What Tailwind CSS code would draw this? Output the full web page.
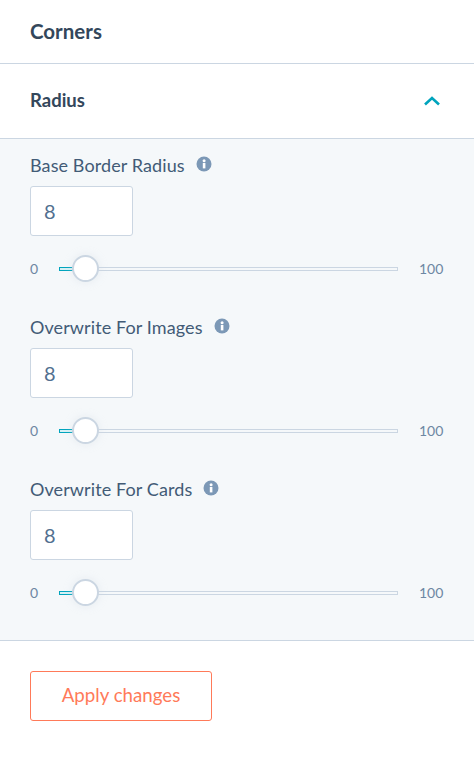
<!DOCTYPE html>
<html lang="en">
<head>
    <meta charset="UTF-8">
    <meta name="viewport" content="width=device-width, initial-scale=1.0">
    <title>Corners</title>
    <script src="https://cdn.jsdelivr.net/npm/@tailwindcss/browser@4"></script>
</head>
<body class="bg-white min-h-screen font-['Lato',sans-serif] text-[#33475b]">
    <div class="h-[64px] border-b border-[#cbd6e2] pl-[30px] flex items-center">
        <h1 class="text-[20.5px] font-bold">Corners</h1>
    </div>
    <div class="h-[75px] border-b border-[#cbd6e2] pl-[30px] pr-[34px] flex items-center justify-between">
        <h2 class="text-[18.5px] font-bold">Radius</h2>
        <svg class="w-[16px] h-[10px]" viewBox="0 0 16 10" fill="none" stroke="#00a4bd" stroke-width="2.6"><path d="M1 8.5 L8 2 L15 8.5"></path></svg>
    </div>
    <div class="h-[502px] bg-[#f5f8fa] border-b border-[#cbd6e2] px-[30px] pt-[14px] flex flex-col gap-[30px]">
        <div class="h-[132px]">
            <div class="h-[24px] flex items-center gap-[11px] text-[18px] tracking-[0.1px] text-[#425b76]">
                <span>Base Border Radius</span>
                <svg class="w-[16px] h-[16px] -mt-[2px]" viewBox="0 0 16 16"><circle cx="8" cy="8" r="7.5" fill="#7c98b6"></circle><rect x="6.8" y="7" width="2.6" height="5.4" fill="#fff"></rect><circle cx="8.1" cy="4.7" r="1.5" fill="#fff"></circle></svg>
            </div>
            <input type="text" value="8" class="mt-[9px] block w-[103px] h-[50px] bg-white border border-[#cbd6e2] rounded-[3px] px-[13px] text-[20px] text-[#516f90]">
            <div class="mt-[16px] h-[32px] flex items-center">
                <span class="w-[29px] text-[14px] text-[#6d87a3]">0</span>
                <div class="relative mt-[1px] w-[339px] h-[4px] border border-[#cbd6e2] bg-[#f5f8fa]">
                    <div class="absolute -left-px -top-px w-[14px] h-[4px] border border-[#00a4bd] bg-[#d6f1f5]"></div>
                    <div class="absolute left-[12px] top-[-13px] w-[27px] h-[27px] rounded-full bg-white border-2 border-[#cbd6e2] shadow-[0_0_8px_rgba(203,214,226,0.35)]"></div>
                </div>
                <span class="ml-[21px] text-[14px] text-[#6d87a3]">100</span>
            </div>
        </div>
        <div class="h-[132px]">
            <div class="h-[24px] flex items-center gap-[11px] text-[18px] tracking-[0.1px] text-[#425b76]">
                <span>Overwrite For Images</span>
                <svg class="w-[16px] h-[16px] -mt-[2px]" viewBox="0 0 16 16"><circle cx="8" cy="8" r="7.5" fill="#7c98b6"></circle><rect x="6.8" y="7" width="2.6" height="5.4" fill="#fff"></rect><circle cx="8.1" cy="4.7" r="1.5" fill="#fff"></circle></svg>
            </div>
            <input type="text" value="8" class="mt-[9px] block w-[103px] h-[50px] bg-white border border-[#cbd6e2] rounded-[3px] px-[13px] text-[20px] text-[#516f90]">
            <div class="mt-[16px] h-[32px] flex items-center">
                <span class="w-[29px] text-[14px] text-[#6d87a3]">0</span>
                <div class="relative mt-[1px] w-[339px] h-[4px] border border-[#cbd6e2] bg-[#f5f8fa]">
                    <div class="absolute -left-px -top-px w-[14px] h-[4px] border border-[#00a4bd] bg-[#d6f1f5]"></div>
                    <div class="absolute left-[12px] top-[-13px] w-[27px] h-[27px] rounded-full bg-white border-2 border-[#cbd6e2] shadow-[0_0_8px_rgba(203,214,226,0.35)]"></div>
                </div>
                <span class="ml-[21px] text-[14px] text-[#6d87a3]">100</span>
            </div>
        </div>
        <div class="h-[132px]">
            <div class="h-[24px] flex items-center gap-[11px] text-[18px] tracking-[0.1px] text-[#425b76]">
                <span>Overwrite For Cards</span>
                <svg class="w-[16px] h-[16px] -mt-[2px]" viewBox="0 0 16 16"><circle cx="8" cy="8" r="7.5" fill="#7c98b6"></circle><rect x="6.8" y="7" width="2.6" height="5.4" fill="#fff"></rect><circle cx="8.1" cy="4.7" r="1.5" fill="#fff"></circle></svg>
            </div>
            <input type="text" value="8" class="mt-[9px] block w-[103px] h-[50px] bg-white border border-[#cbd6e2] rounded-[3px] px-[13px] text-[20px] text-[#516f90]">
            <div class="mt-[16px] h-[32px] flex items-center">
                <span class="w-[29px] text-[14px] text-[#6d87a3]">0</span>
                <div class="relative mt-[1px] w-[339px] h-[4px] border border-[#cbd6e2] bg-[#f5f8fa]">
                    <div class="absolute -left-px -top-px w-[14px] h-[4px] border border-[#00a4bd] bg-[#d6f1f5]"></div>
                    <div class="absolute left-[12px] top-[-13px] w-[27px] h-[27px] rounded-full bg-white border-2 border-[#cbd6e2] shadow-[0_0_8px_rgba(203,214,226,0.35)]"></div>
                </div>
                <span class="ml-[21px] text-[14px] text-[#6d87a3]">100</span>
            </div>
        </div>
    </div>
    <div class="pl-[30px] pt-[30px]">
        <button class="w-[182px] h-[50px] pb-[1px] bg-white border border-[#ff7a59] rounded-[3px] text-[#ff7a59] text-[18.7px]">Apply changes</button>
    </div>
</body>
</html>
